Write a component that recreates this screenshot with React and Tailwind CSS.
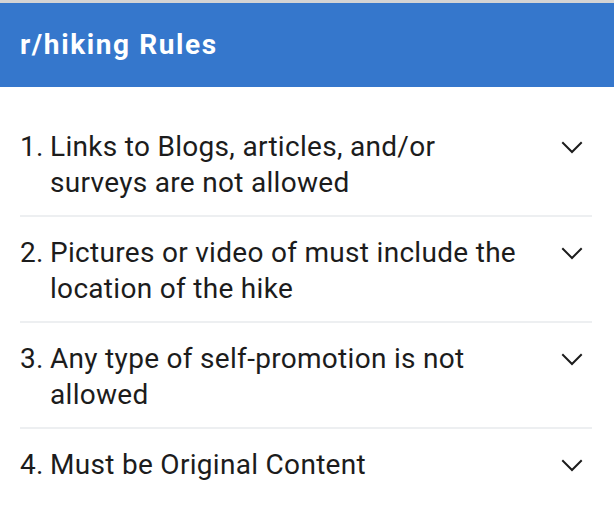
import React from "react";

const rules = [
  "Links to Blogs, articles, and/or surveys are not allowed",
  "Pictures or video of must include the location of the hike",
  "Any type of self-promotion is not allowed",
  "Must be Original Content",
];

function Chevron() {
  return (
    <svg width="22" height="22" viewBox="0 0 22 22" fill="none" stroke="#1c1c1c" strokeWidth="2" strokeLinecap="square" className="shrink-0">
      <path d="M2 7l9 9 9-9" />
    </svg>
  );
}

export default function App() {
  return (
    <div className="w-[614px] h-[512px] bg-white border-t-[3px] border-[#d4d4d4]" style={{ fontFamily: "Roboto, 'Noto Sans', sans-serif" }}>
      <div className="h-[84px] bg-[#3577cc] flex items-center px-5">
        <h2 className="text-white font-bold text-[28px] tracking-[1.6px]">r/hiking Rules</h2>
      </div>
      <ul className="pt-6 pl-5 pr-[22px]">
        {rules.map((r, i) => (
          <li key={i} className={`flex items-start pt-[18px] pb-[14px] ${i < rules.length - 1 ? "border-b-2 border-[#edeff1]" : ""}`}>
            <span className="w-[30px] shrink-0 text-[28px] leading-[36px] tracking-[0.3px] text-[#1c1c1c]">{i + 1}.</span>
            <span className="flex-1 pr-8 text-[28px] leading-[36px] tracking-[0.3px] text-[#1c1c1c]">{r}</span>
            <span className="mt-[7px] mr-[9px]"><Chevron /></span>
          </li>
        ))}
      </ul>
    </div>
  );
}
